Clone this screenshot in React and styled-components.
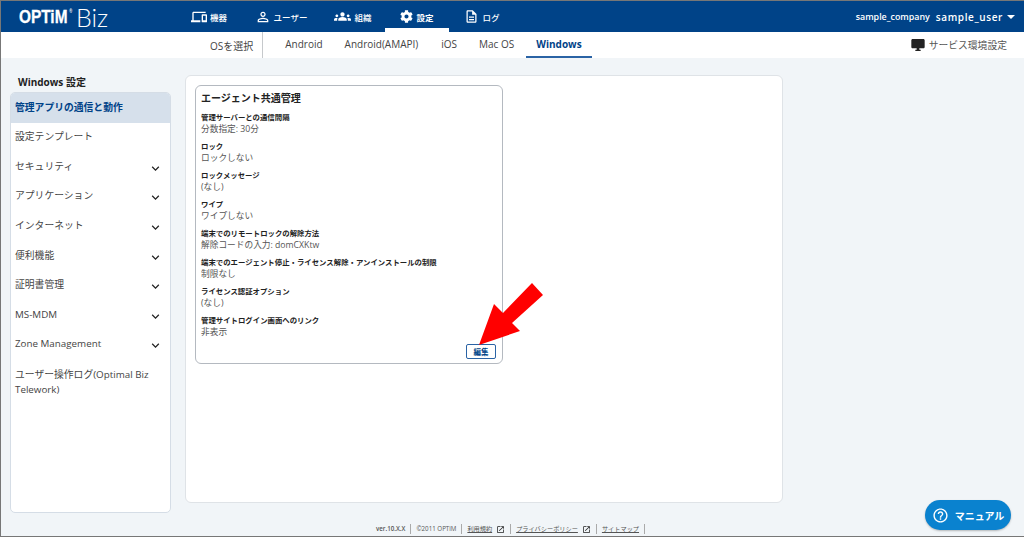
import * as React from 'react';
import styled, { createGlobalStyle } from 'styled-components';
import { MdDevices, MdPersonOutline, MdGroups, MdOutlineDescription, MdDesktopWindows, MdHelpOutline, MdExpandMore, MdOpenInNew } from 'react-icons/md';
import { FaCog } from 'react-icons/fa';

const Global = createGlobalStyle`
html, body { margin: 0; padding: 0; background: #f1f5f8; }
body { font-family: "Open Sans", "Noto Sans CJK JP", sans-serif; color: #333; }
* { box-sizing: border-box; }
`;

const Page = styled.div`
position: relative;
width: 1024px;
height: 537px;
overflow: hidden;
display: flex;
flex-direction: column;
border-top: 1px solid #777;
border-left: 1px solid #777;
border-bottom: 1px solid #777;
`;

const Header = styled.header`
height: 31px;
flex: none;
background: #004388;
display: flex;
align-items: center;
color: #fff;
padding-left: 18px;
`;

const Logo = styled.div`
width: 158px;
display: flex;
align-items: center;
flex: none;
`;

const LogoMark = styled.span`
font-family: "Liberation Sans", sans-serif;
font-weight: 700;
font-size: 19px;
-webkit-text-stroke: 0.3px #fff;
transform: scaleX(0.81);
transform-origin: left;
width: 57px;
position: relative;
`;

const LogoReg = styled.sup`
position: absolute;
top: 3px;
left: 62px;
font-size: 5px;
line-height: 5px;
-webkit-text-stroke: 0;
`;

const LogoBiz = styled.span`
font-family: "Lato", sans-serif;
font-weight: 300;
font-size: 25px;
line-height: 26px;
`;

const MainNav = styled.nav`
display: flex;
height: 100%;
flex: 1;
`;

const NavItem = styled.div`
height: 100%;
width: ${p => p.$w}px;
display: flex;
align-items: center;
justify-content: center;
gap: 3px;
font-size: 8.5px;
font-weight: ${p => (p.$active ? 700 : 500)};
position: relative;
&::after {
  content: '';
  display: ${p => (p.$active ? 'block' : 'none')};
  position: absolute;
  left: 0;
  right: 0;
  bottom: 0;
  height: 4px;
  background: #fff;
}
`;

const Account = styled.div`
display: flex;
align-items: center;
gap: 6px;
padding-right: 9px;
font-weight: 600;
`;

const Company = styled.span`
font-size: 8.9px;
`;

const UserName = styled.span`
font-size: 10px;
letter-spacing: 0.6px;
`;

const Caret = styled.span`
width: 0;
height: 0;
border-left: 4px solid transparent;
border-right: 4px solid transparent;
border-top: 4px solid #fff;
margin: 1px 0 0 -2px;
`;

const SubNav = styled.div`
height: 26px;
flex: none;
background: #fff;
display: flex;
align-items: stretch;
padding-left: 209px;
font-size: 10px;
`;

const OsLabel = styled.div`
display: flex;
align-items: center;
padding-right: 9px;
border-right: 1px solid #c6c9cc;
color: #444;
margin-right: 11px;
`;

const OsTab = styled.div`
display: flex;
align-items: center;
padding: 0 ${p => (p.$active ? 10 : 11)}px;
margin-left: ${p => p.$ml || 0}px;
color: ${p => (p.$active ? '#004388' : '#444')};
font-weight: ${p => (p.$active ? 700 : 400)};
border-bottom: 2px solid ${p => (p.$active ? '#2a63a5' : 'transparent')};
`;

const EnvLink = styled.div`
margin-left: auto;
display: flex;
align-items: center;
gap: 3px;
padding-right: 17px;
font-size: 9.8px;
color: #555;
`;

const Body = styled.div`
flex: 1;
display: flex;
align-items: flex-start;
padding: 17px 0 0 9px;
gap: 14px;
min-height: 0;
`;

const Side = styled.aside`
width: 161px;
flex: none;
padding-top: 1px;
`;

const SideTitle = styled.div`
height: 16px;
padding-left: 8px;
font-size: 10px;
font-weight: 700;
color: #222;
line-height: 13px;
`;

const SideList = styled.div`
height: 421px;
background: #fff;
border: 1px solid #d5dde6;
border-radius: 5px;
overflow: hidden;
`;

const SideItem = styled.div`
min-height: 29.6px;
display: flex;
align-items: center;
justify-content: space-between;
padding: ${p => (p.$tall ? '7px 5px 0 4px' : '0 7px 2px 4px')};
font-size: 9.8px;
line-height: 15px;
color: #444;
svg { margin-top: 4px; }
`;

const SideActive = styled(SideItem)`
height: 30px;
background: #d6e0eb;
color: #004388;
font-weight: 700;
`;

const Panel = styled.main`
width: 598px;
height: 428px;
background: #fff;
border: 1px solid #dfe3e7;
border-radius: 6px;
padding: 9px 9px;
`;

const Card = styled.section`
position: relative;
width: 308px;
height: 279px;
border: 1px solid #b4b9c0;
border-radius: 6px;
padding: 4px 5px;
`;

const CardTitle = styled.h2`
margin: 0 0 6px;
font-size: 10px;
line-height: 16px;
font-weight: 700;
color: #222;
`;

const Field = styled.div`
height: 29px;
`;

const FieldName = styled.div`
font-size: 7.4px;
line-height: 11px;
font-weight: 700;
color: #222;
`;

const FieldValue = styled.div`
font-size: 8.7px;
line-height: 13px;
color: #555;
`;

const EditButton = styled.button`
position: absolute;
right: 6px;
bottom: 4px;
width: 30px;
height: 15px;
padding: 0;
background: #fff;
border: 1px solid #2a63a5;
border-radius: 2px;
font: 700 7.5px "Open Sans", "Noto Sans CJK JP", sans-serif;
color: #004388;
`;

const Arrow = styled.svg`
position: absolute;
left: -1px;
top: -1px;
pointer-events: none;
`;

const Footer = styled.footer`
position: absolute;
left: 375px;
top: 523px;
display: flex;
align-items: center;
font-size: 6.2px;
color: #555;
line-height: 10px;
`;

const FootCell = styled.span`
display: flex;
align-items: center;
gap: 4px;
padding: 0 5px;
border-right: 1px solid #aaa;
&:first-child { padding-left: 0; font-weight: 600; }
`;

const FootLink = styled.span`
text-decoration: underline;
`;

const ManualButton = styled.div`
position: absolute;
left: 924px;
top: 499px;
width: 86px;
height: 30px;
border-radius: 15px;
background: #0a82cf;
color: #fff;
display: flex;
align-items: center;
justify-content: center;
gap: 6px;
font-size: 10px;
font-weight: 700;
box-shadow: 0 1px 2px rgba(0,0,0,.25);
`;

const fields = [
  ['管理サーバーとの通信間隔', '分数指定: 30分'],
  ['ロック', 'ロックしない'],
  ['ロックメッセージ', '(なし)'],
  ['ワイプ', 'ワイプしない'],
  ['端末でのリモートロックの解除方法', '解除コードの入力: domCXKtw'],
  ['端末でのエージェント停止・ライセンス解除・アンインストールの制限', '制限なし'],
  ['ライセンス認証オプション', '(なし)'],
  ['管理サイトログイン画面へのリンク', '非表示'],
];

const menu = ['セキュリティ', 'アプリケーション', 'インターネット', '便利機能', '証明書管理', 'MS-MDM', 'Zone Management'];

const App = () => (
  <Page>
    <Global />
    <Header>
      <Logo>
        <LogoMark>OPTiM<LogoReg>®</LogoReg></LogoMark>
        <LogoBiz>Biz</LogoBiz>
      </Logo>
      <MainNav>
        <NavItem $w={64}><MdDevices size={16} />機器</NavItem>
        <NavItem $w={80}><MdPersonOutline size={16} />ユーザー</NavItem>
        <NavItem $w={64}><MdGroups size={17} />組織</NavItem>
        <NavItem $w={64} $active><FaCog size={13} />設定</NavItem>
        <NavItem $w={66}><MdOutlineDescription size={15} />ログ</NavItem>
      </MainNav>
      <Account>
        <Company>sample_company</Company>
        <UserName>sample_user</UserName>
        <Caret />
      </Account>
    </Header>
    <SubNav>
      <OsLabel>OSを選択</OsLabel>
      <OsTab>Android</OsTab>
      <OsTab>Android(AMAPI)</OsTab>
      <OsTab $ml={1}>iOS</OsTab>
      <OsTab>Mac OS</OsTab>
      <OsTab $active $ml={1}>Windows</OsTab>
      <EnvLink><MdDesktopWindows size={16} color="#222" />サービス環境設定</EnvLink>
    </SubNav>
    <Body>
      <Side>
        <SideTitle>Windows 設定</SideTitle>
        <SideList>
          <SideActive>管理アプリの通信と動作</SideActive>
          <SideItem>設定テンプレート</SideItem>
          {menu.map(m => (
            <SideItem key={m}>{m}<MdExpandMore size={15} color="#222" /></SideItem>
          ))}
          <SideItem $tall>ユーザー操作ログ(Optimal Biz Telework)</SideItem>
        </SideList>
      </Side>
      <Panel>
        <Card>
          <CardTitle>エージェント共通管理</CardTitle>
          {fields.map(([name, value]) => (
            <Field key={name}>
              <FieldName>{name}</FieldName>
              <FieldValue>{value}</FieldValue>
            </Field>
          ))}
          <EditButton>編集</EditButton>
        </Card>
      </Panel>
    </Body>
    <Footer>
      <FootCell>ver.10.X.X</FootCell>
      <FootCell>©2011 OPTiM</FootCell>
      <FootCell><FootLink>利用規約</FootLink><MdOpenInNew size={9} color="#222" /></FootCell>
      <FootCell><FootLink>プライバシーポリシー</FootLink><MdOpenInNew size={9} color="#222" /></FootCell>
      <FootCell><FootLink>サイトマップ</FootLink></FootCell>
    </Footer>
    <ManualButton><MdHelpOutline size={17} />マニュアル</ManualButton>
    <Arrow width="1024" height="537" viewBox="0 0 1024 537">
      <polygon points="479,345 494,304 503,313 532,283 543,295 512,323 520,331" fill="#ff0000" />
    </Arrow>
  </Page>
);

export default App;
